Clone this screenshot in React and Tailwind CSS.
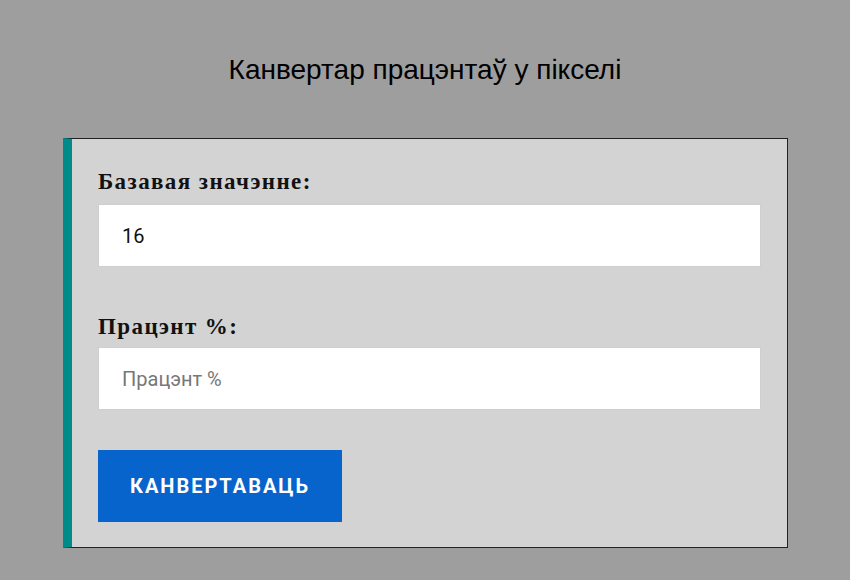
export default function App() {
  return (
    <div className="min-h-[580px] w-full bg-[#9e9e9e] pt-[50px]" style={{ fontFamily: 'Roboto, "Liberation Sans", sans-serif' }}>
      <h1 className="text-center text-[28px] leading-[40px] text-black font-normal" style={{ fontFamily: '"Liberation Sans", Arial, sans-serif' }}>
        Канвертар працэнтаў у пікселі
      </h1>

      <div className="ml-[63px] mr-[62px] mt-[48px] border border-[#222] border-l-[9px] border-l-[#008b8b] bg-[#d3d3d3] px-[26px] pt-[28px] pb-[25px]">
        <label className="block text-[23px] font-bold leading-[30px] tracking-[1.4px] text-[#111] mb-[7px]" style={{ fontFamily: '"Liberation Serif", "DejaVu Serif", serif' }}>
          Базавая значэнне:
        </label>
        <input
          defaultValue="16"
          className="block w-full h-[63px] bg-white border border-[#cfcfcf] px-[23px] text-[20px] text-[#111] outline-none"
        />

        <label className="block text-[23px] font-bold leading-[30px] tracking-[1.4px] text-[#111] mt-[45px] mb-[5px]" style={{ fontFamily: '"Liberation Serif", "DejaVu Serif", serif' }}>
          Працэнт %:
        </label>
        <input
          placeholder="Працэнт %"
          className="block w-full h-[63px] bg-white border border-[#cfcfcf] px-[23px] text-[20px] text-[#111] placeholder:text-[#777] outline-none"
        />

        <button className="mt-[40px] block h-[72px] w-[244px] bg-[#0764cc] text-white text-[20px] font-bold tracking-[2px] uppercase">
          Канвертаваць
        </button>
      </div>
    </div>
  )
}
